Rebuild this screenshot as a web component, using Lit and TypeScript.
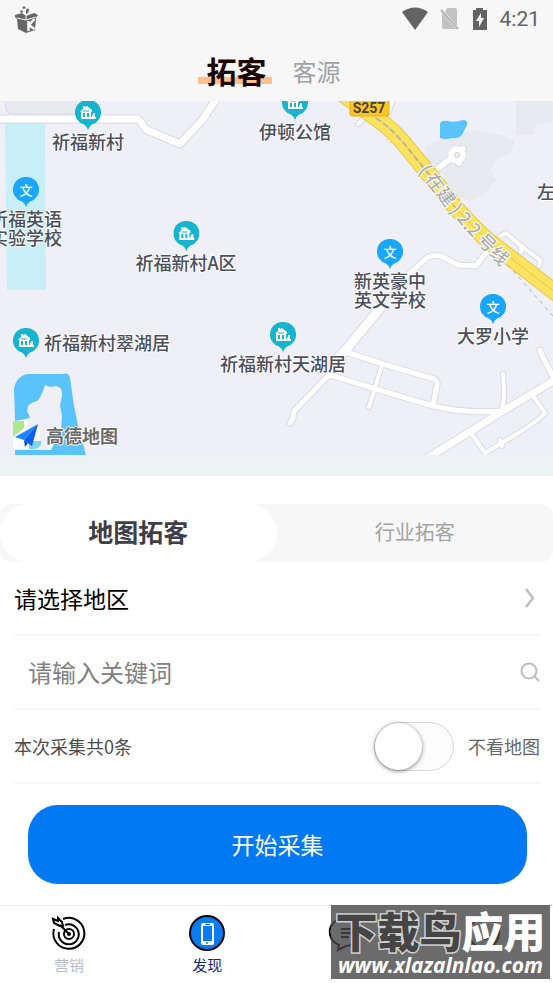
import { LitElement, html, css, svg } from "lit";
import { customElement, state } from "lit/decorators.js";
import { styleMap } from "lit/directives/style-map.js";
import { classMap } from "lit/directives/class-map.js";

type Kind = "home" | "school" | "text";

interface Place {
  kind: Kind;
  x: number;
  y: number;
  lines: string[];
  side?: boolean;
}

const MAP_WIDTH = 553;
const MAP_HEIGHT = 354;

/* x is the middle of the marker (or its left edge for side labels), y its top. */
const PLACES: Place[] = [
  { kind: "home", x: 88, y: -1, lines: ["祈福新村"] },
  { kind: "home", x: 295, y: -11, lines: ["伊顿公馆"] },
  { kind: "school", x: 26, y: 76, lines: ["祈福英语", "实验学校"] },
  { kind: "home", x: 186, y: 120, lines: ["祈福新村A区"] },
  { kind: "school", x: 390, y: 138, lines: ["新英豪中", "英文学校"] },
  { kind: "school", x: 493, y: 193, lines: ["大罗小学"] },
  { kind: "home", x: 283, y: 221, lines: ["祈福新村天湖居"] },
  { kind: "home", x: 13, y: 227, lines: ["祈福新村翠湖居"], side: true },
  { kind: "text", x: 537, y: 81, lines: ["左边村"], side: true },
];

const ROADS: { d: string; w: number }[] = [
  { d: "M-5 119H136Q140 119 144 127Q147 131 152 132L180 144L203 119L218 96", w: 7 },
  { d: "M381 307L345 351L329 375L295 410Q293 412 293 418L290 423", w: 5 },
  { d: "M381 307L345 351L334 362", w: 9 },
  { d: "M346 352L383 364L434 379Q438 381 437 385L433 405", w: 5 },
  { d: "M330 375L376 389L433 406Q466 414 503 411", w: 5 },
  { d: "M382 365L369 407", w: 4 },
  { d: "M503 374L504 390Q504 405 501 411", w: 4 },
  { d: "M426 459L503 411L560 377", w: 7 },
  { d: "M540 350L543 358L555 380", w: 5 },
  { d: "M533 396L545 413Q539 420 520 432L485 453L471 433M500 440L502 446", w: 4 },
  { d: "M408 275L428 257Q435 254 441 256L458 265L476 266L488 250", w: 5 },
  { d: "M500 236L506 233L521 246L540 260L539 266M522 246L521 252", w: 4 },
  { d: "M436 170L455 155M457 155L463 149M457 155L459 163", w: 6 },
  { d: "M358 124L364 119M390 140L391 139M392 101L389 112", w: 4 },
];

const HIGHWAY =
  "M343 94L376 118Q395 131 410 151L428 173L455 207Q470 224 486 239L521 266L560 296";

const homeGlyph = svg`
  <path fill="#fff" d="M5 12L8 9V6H10V7L12 6L17 10V12H16V17H14V13H12V17H10V13H8V17H6V12ZM18 13H20V17H17V15H18ZM6 17H21V19H6Z"/>
  <path fill="none" stroke="#17b4cf" d="M8 11H14"/>`;

@customElement("map-pin")
class MapPin extends LitElement {
  static properties = { kind: {} };
  declare kind: Kind;

  static styles = css`
    :host {
      display: block;
      flex: none;
      width: 26px;
      height: 30px;
      position: relative;
    }
    .shape {
      display: block;
    }
    .glyph {
      position: absolute;
      inset: 0 0 4px;
      display: grid;
      place-items: center;
      color: #fff;
      font: 500 13px/24px "Noto Sans CJK SC", sans-serif;
      text-shadow: none;
    }
  `;

  render() {
    const home = this.kind === "home";
    return html`
      <svg class="shape" width="26" height="30" viewBox="0 0 26 30" aria-hidden="true">
        <path
          fill=${home ? "#17b4cf" : "#1aa7fb"}
          d="M13 0A12.500 12.500 0 0 1 17 24.500Q14.500 26 13 30Q11.500 26 9 24.500A12.500 12.500 0 0 1 13 0Z"
        />
        ${home ? homeGlyph : ""}
      </svg>
      ${home ? "" : html`<span class="glyph">文</span>`}
    `;
  }
}

@customElement("city-map")
class CityMap extends LitElement {
  static styles = css`
    :host {
      display: block;
      position: relative;
      overflow: hidden;
      background: #eeeff7;
    }
    .ground {
      display: block;
      width: 100%;
      height: auto;
    }
    .line-name {
      font: 500 18px "Noto Sans CJK SC", sans-serif;
      fill: #adadad;
      stroke: #fff;
      stroke-width: 2px;
      paint-order: stroke;
    }
    .shield {
      font: 700 14px Roboto, "Noto Sans CJK SC", sans-serif;
      fill: #4a4330;
    }
    .place {
      position: absolute;
      display: flex;
      flex-direction: column;
      align-items: center;
      gap: 2px;
      transform: translateX(-50%);
      color: #4b4f5c;
      font: 500 18px/19px "Noto Sans CJK SC", sans-serif;
      white-space: nowrap;
      text-align: center;
      text-shadow: 1px 0 #fff, -1px 0 #fff, 0 1px #fff, 0 -1px #fff;
    }
    .place.side {
      flex-direction: row;
      gap: 5px;
      transform: none;
    }
    .name {
      display: block;
    }
    .brand {
      position: absolute;
      left: 12px;
      bottom: 5px;
      display: flex;
      align-items: center;
      gap: 4px;
      color: #6b6b6b;
      font: 700 18px/30px "Noto Sans CJK SC", sans-serif;
      text-shadow: 1px 0 #fff, -1px 0 #fff, 0 1px #fff, 0 -1px #fff;
    }
  `;

  render() {
    return html`
      <svg class="ground" viewBox="0 101 553 354" aria-hidden="true">
        <path fill="#e8eaee" d="M7 101H78V113H12Q7 113 7 108Z" />
        <path fill="none" stroke="#d9cff5" d="M6 101V108Q6 114 14 114H74" />
        <path fill="#c8eff7" d="M5 123H45L46 290H7Z" />
        <path
          fill="#e6eaee"
          d="M425 146L440 140L473 130L500 135L515 141L510 153L496 160L490 171L496 180L483 195L470 201L455 195L436 171L425 155ZM516 101H553V121L536 125L533 135H516Z"
        />
        <path
          fill="#5ac3fc"
          d="M440 124Q441 120 447 121Q455 123 463 120Q468 120 467 125L462 135Q458 139 452 138Q445 140 440 138Z"
        />
        <path
          fill="#5ac3fc"
          d="M15 420L14 388Q17 376 27 374H62Q69 372 70 378L74 406L79 430L86 455H15Z"
        />
        <path
          fill="#eeeff7"
          d="M45 385Q49 388 56 386Q63 387 62 396L60 405L62 416L61 430L55 442L51 450H15V421L30 418Q29 414 27 411Q27 403 37 401Q41 398 45 385Z"
        />
        ${ROADS.map(
          (r) => svg`<path d=${r.d} fill="none" stroke="#dadbe2" stroke-width=${r.w + 2}
            stroke-linecap="round" stroke-linejoin="round"/>`
        )}
        ${ROADS.map(
          (r) => svg`<path d=${r.d} fill="none" stroke="#fff" stroke-width=${r.w}
            stroke-linecap="round" stroke-linejoin="round"/>`
        )}
        <circle cx="457" cy="155" r="5.500" fill="#eeeff7" stroke="#fff" stroke-width="6" />
        <circle cx="457" cy="155" r="2.500" fill="#eeeff7" stroke="#d0d1d8" />
        <path d=${HIGHWAY} fill="none" stroke="#e3c84f" stroke-width="17" />
        <path d=${HIGHWAY} fill="none" stroke="#fbe25f" stroke-width="15" />
        <path d=${HIGHWAY} fill="none" stroke="#e3c84f" />
        <path
          d="M376 118Q395 131 410 151L428 173L455 207"
          fill="none"
          stroke="#b9b59b"
          stroke-width="2"
          stroke-dasharray="6 3"
        />
        <path d="M508 265L553 316" fill="none" stroke="#b5b5bb" stroke-dasharray="4 4" />
        <rect x="350" y="97" width="39" height="19" rx="2" fill="#fcc626" stroke="#eab01c" />
        <text class="shield" x="369" y="113" text-anchor="middle">S257</text>
        <path id="metro" fill="none" d="M418 171L442 202L466 231L512 278" />
        <text class="line-name"><textPath href="#metro">( 在建 ) 2.2 号线</textPath></text>
      </svg>
      ${PLACES.map(
        (p) => html`
          <div
            class=${classMap({ place: true, side: !!p.side })}
            style=${styleMap({
              left: `${(p.x / MAP_WIDTH) * 100}%`,
              top: `${(p.y / MAP_HEIGHT) * 100}%`,
            })}
          >
            ${p.kind === "text" ? "" : html`<map-pin .kind=${p.kind}></map-pin>`}
            <span>${p.lines.map((l) => html`<span class="name">${l}</span>`)}</span>
          </div>
        `
      )}
      <div class="brand">
        <svg width="30" height="30" viewBox="0 0 30 30" aria-hidden="true">
          <path fill="#f8fafc" d="M1 1H16V8H28V29H1Z" />
          <path fill="#aeea8c" d="M1 1H12V8L1 17Z" />
          <path fill="#7fd4fb" d="M17 21H29V24Q27 29 22 29H17Z" />
          <path fill="#1a86ff" d="M26 4L3 17L12 20Z" />
          <path fill="#0a5df0" d="M26 4L12 20L20 26Z" />
          <path fill="#0647c4" d="M12 20L13 27L16 23Z" />
        </svg>
        <span>高德地图</span>
      </div>
    `;
  }
}

@customElement("app-root")
class AppRoot extends LitElement {
  @state() private hideMap = false;

  static styles = css`
    :host {
      display: flex;
      flex-direction: column;
      min-height: 100vh;
      position: relative;
      background: #fff;
      color: #000;
      font-family: "Noto Sans CJK SC", sans-serif;
    }
    button,
    input {
      margin: 0;
      padding: 0;
      border: 0;
      background: none;
      font: inherit;
      color: inherit;
    }
    button {
      cursor: pointer;
    }
    svg {
      display: block;
      flex: none;
    }
    .top {
      background: #f7f7f7;
    }
    .status {
      display: flex;
      align-items: center;
      height: 38px;
      padding: 0 13px 0 14px;
      color: #636363;
      font: 400 21px/38px Roboto, "Noto Sans CJK SC", sans-serif;
    }
    .system {
      display: flex;
      align-items: center;
      gap: 11px;
      margin-left: auto;
    }
    .heads {
      display: flex;
      justify-content: center;
      align-items: center;
      gap: 12px;
      height: 63px;
      padding-right: 6px;
    }
    .head {
      padding: 2px 9px 0;
      color: #a0a3a6;
      font-size: 24px;
      line-height: 32px;
    }
    .head.current {
      padding: 0 5px 0 9px;
      color: #1c0500;
      font-size: 30px;
      font-weight: 700;
      line-height: 32px;
      background: linear-gradient(#ffc08d, #ffc08d) 0 23px / 100% 7px no-repeat;
    }
    .strip {
      height: 21px;
      background: #edf2f5;
    }
    .modes {
      display: grid;
      grid-template-columns: 1fr 1fr;
      height: 58px;
      margin-top: 28px;
      background: #f7f7f7;
      border-radius: 12px;
    }
    .mode {
      padding-bottom: 4px;
      border-radius: 29px;
      color: #a3a3a3;
      font-size: 20px;
    }
    .mode.current {
      background: #fff;
      color: #3f3e48;
      font-size: 25px;
      font-weight: 700;
    }
    .form {
      padding: 0 13px 0 14px;
    }
    .row {
      display: flex;
      align-items: center;
      width: 100%;
      height: 74px;
      border-bottom: 2px solid #f7f7f7;
      box-sizing: border-box;
    }
    .region {
      justify-content: space-between;
      padding: 0 4px 0 0;
      font-size: 23px;
    }
    .keyword {
      flex: 1;
      min-width: 0;
      padding: 0 0 2px 14px;
      outline: none;
      font-size: 24px;
    }
    .keyword::placeholder {
      color: #808080;
      opacity: 1;
    }
    .count {
      color: #4d4d4d;
      font-size: 18px;
    }
    .toggle {
      display: flex;
      align-items: center;
      gap: 14px;
      margin-left: auto;
      color: #666;
      font-size: 18px;
    }
    .switch {
      appearance: none;
      display: flex;
      align-items: center;
      width: 80px;
      height: 49px;
      border: 1px solid #d9d9d9;
      border-radius: 25px;
      background: #fdfdfd;
      box-sizing: border-box;
    }
    .switch::before {
      content: "";
      width: 47px;
      height: 47px;
      border-radius: 50%;
      background: #fff;
      box-shadow: 0 1px 4px rgba(0, 0, 0, 0.5);
    }
    .switch:checked {
      justify-content: flex-end;
      background: #0079f2;
    }
    .start {
      height: 79px;
      margin: 21px 26px 21px 28px;
      padding-bottom: 2px;
      border-radius: 30px;
      background: #0079f2;
      color: #fff;
      font-size: 23px;
    }
    .nav {
      display: grid;
      grid-template-columns: repeat(4, 1fr);
      flex: 1;
      border-top: 1px solid #ececec;
    }
    .tab {
      display: flex;
      flex-direction: column;
      align-items: center;
      padding-top: 9px;
      color: #b9bfcb;
      font-size: 15px;
      line-height: 24px;
      text-decoration: none;
    }
    .tab.current {
      color: #17247c;
    }
    .mark {
      position: absolute;
      right: 3px;
      bottom: 4px;
      width: 219px;
      height: 74px;
      background: rgba(70, 70, 70, 0.8);
      color: #fff;
      text-align: center;
      white-space: nowrap;
    }
    .mark-name {
      font-size: 42px;
      font-weight: 900;
      line-height: 50px;
    }
    .mark-dark {
      color: #454545;
      -webkit-text-stroke: 3px #d0d0d0;
      paint-order: stroke;
    }
    .mark-site {
      font: italic 700 21px/20px "Open Sans", sans-serif;
    }
  `;

  render() {
    return html`
      <header class="top">
        <div class="status">
          <svg width="26" height="28" viewBox="0 0 26 28" aria-hidden="true">
            <path
              fill="#666"
              d="M1 10L8 8L12 11L20 8L24 10L22 13L21 25L12 28L4 24L3 14L1 12ZM8 3L10 1L12 3L10 4ZM6 6L8 5L9 7L7 8ZM12 5L14 3L15 5L14 8L12 9Z"
            />
            <path fill="none" stroke="#f7f7f7" d="M3 13L12 15L22 12M12 11V15" />
            <path fill="none" stroke="#fff" stroke-width="2.500" d="M14.500 16V26M20.500 14L15 20L20.500 24" />
          </svg>
          <div class="system">
            <svg width="28" height="24" viewBox="0 0 28 24" aria-hidden="true">
              <path fill="#636363" d="M1 5Q14 -4 27 5L14 23Z" />
            </svg>
            <svg width="20" height="24" viewBox="0 0 20 24" aria-hidden="true">
              <path fill="#c2c2c2" d="M7 1H15Q17 1 17 3V19L5 5ZM2 6L16 22H4Q2 22 2 20Z" />
              <path fill="none" stroke="#b5b5b5" stroke-width="2" d="M1 3L18 22" />
            </svg>
            <svg width="18" height="24" viewBox="0 0 18 24" aria-hidden="true">
              <path fill="#636363" d="M5 1H12V3H16V23H2V3H5Z" />
              <path fill="#fff" d="M10 6L5 14H8V20L13 11H10Z" />
            </svg>
            <span>4:21</span>
          </div>
        </div>
        <nav class="heads">
          <button class="head current">拓客</button>
          <button class="head">客源</button>
        </nav>
      </header>

      <city-map></city-map>
      <div class="strip"></div>

      <div class="modes">
        <button class="mode current">地图拓客</button>
        <button class="mode">行业拓客</button>
      </div>

      <div class="form">
        <button class="row region">
          <span>请选择地区</span>
          <svg width="12" height="20" viewBox="0 0 12 20" aria-hidden="true">
            <path fill="none" stroke="#bdbdbd" stroke-width="2.500" d="M2 1L9 10L2 19" />
          </svg>
        </button>
        <label class="row">
          <input class="keyword" type="text" placeholder="请输入关键词" aria-label="请输入关键词" />
          <svg width="20" height="20" viewBox="0 0 20 20" aria-hidden="true">
            <circle cx="9" cy="9" r="7.500" fill="none" stroke="#bdbdbd" stroke-width="2" />
            <path stroke="#bdbdbd" stroke-width="2" d="M14 14L19 19" />
          </svg>
        </label>
        <div class="row">
          <span class="count">本次采集共0条</span>
          <label class="toggle">
            <input
              class="switch"
              type="checkbox"
              .checked=${this.hideMap}
              @change=${() => (this.hideMap = !this.hideMap)}
            />
            不看地图
          </label>
        </div>
      </div>

      <button class="start">开始采集</button>

      <nav class="nav">
        <a class="tab" href="#marketing">
          <svg width="38" height="38" viewBox="0 0 38 38" aria-hidden="true">
            <g fill="none" stroke="#000" stroke-width="2">
              <path d="M13 4A15.500 15.500 0 1 1 4 14" />
              <path d="M15 10A10 10 0 1 1 9 17" />
              <circle cx="19" cy="19" r="5" />
              <path d="M19 19L10 10M10 11L4 8L3 4L8 6L8 3L12 7L13 11Z" />
            </g>
            <circle cx="19" cy="19" r="2" />
          </svg>
          营销
        </a>
        <a class="tab current" href="#discover">
          <svg width="38" height="38" viewBox="0 0 38 38" aria-hidden="true">
            <circle cx="19" cy="18" r="17" fill="#0a7cf0" stroke="#0a0a14" stroke-width="2" />
            <rect x="13" y="8" width="13" height="22" rx="2" fill="#fff" />
            <path fill="#0a7cf0" d="M15 11H24V26H15ZM17 9H22V10H17Z" />
            <circle cx="19" cy="28" r="1" fill="#0a7cf0" />
          </svg>
          发现
        </a>
        <a class="tab" href="#messages" aria-label="messages">
          <svg width="38" height="38" viewBox="0 0 38 38" aria-hidden="true">
            <path
              fill="none"
              stroke="#000"
              stroke-width="2"
              d="M12 30A15 14 0 1 1 19 31L11 35ZM14 14H26M14 18H26M14 22H22"
            />
          </svg>
        </a>
        <a class="tab" href="#profile" aria-label="profile">
          <svg width="38" height="38" viewBox="0 0 38 38" aria-hidden="true">
            <circle cx="19" cy="18" r="15" fill="none" stroke="#000" stroke-width="2" />
            <path fill="none" stroke="#000" stroke-width="2" d="M12 20Q19 28 26 20" />
          </svg>
        </a>
      </nav>

      <div class="mark">
        <div class="mark-name"><span class="mark-dark">下载鸟</span>应用</div>
        <div class="mark-site">www.xlazalnlao.com</div>
      </div>
    `;
  }
}
